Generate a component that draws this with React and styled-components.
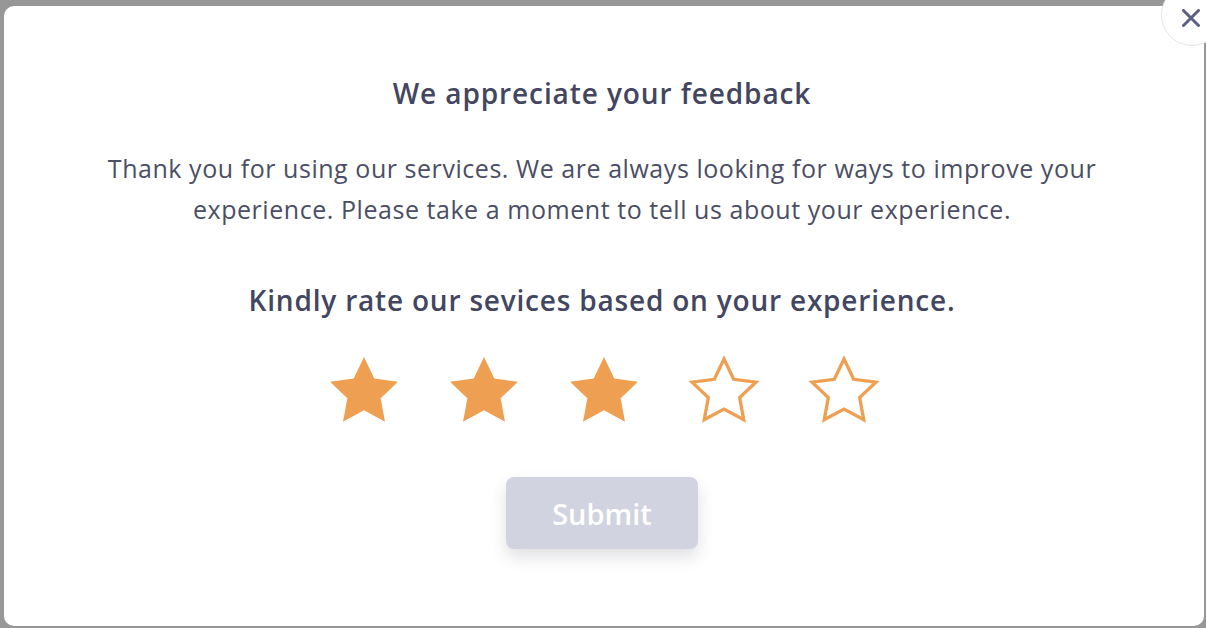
import React, { useState } from 'react';
import styled, { createGlobalStyle } from 'styled-components';

const GlobalStyle = createGlobalStyle`
  html, body {
    margin: 0;
    padding: 0;
    background: #979797;
    font-family: "Open Sans", "Lato", sans-serif;
    overflow: hidden;
  }
`;

const Backdrop = styled.div`
  width: 1206px;
  height: 628px;
  padding: 6px 2px 2px 4px;
  box-sizing: border-box;
`;

const Modal = styled.div`
  position: relative;
  width: 1200px;
  height: 620px;
  background: #fff;
  border-radius: 10px;
  display: flex;
  flex-direction: column;
  align-items: center;
  padding-top: 71px;
  box-sizing: border-box;
`;

const CloseButton = styled.button`
  position: absolute;
  top: -22px;
  right: -19px;
  width: 62px;
  height: 62px;
  border-radius: 50%;
  background: #fff;
  border: 1px solid #e6e6ea;
  display: flex;
  align-items: flex-start;
  justify-content: flex-start;
  padding: 0;
  cursor: pointer;

  svg {
    margin: 24px 0 0 20px;
  }
`;

const Title = styled.h2`
  margin: 0 4px 0 0;
  font-size: 28px;
  line-height: 32px;
  font-weight: 600;
  letter-spacing: 0.9px;
  color: #434660;
`;

const Text = styled.p`
  margin: 39px 4px 0 0;
  width: 1010px;
  text-align: center;
  font-size: 25px;
  line-height: 41px;
  font-weight: 400;
  letter-spacing: 0.55px;
  color: #4b4e65;
`;

const Subtitle = styled.h3`
  margin: 54px 4px 0 0;
  font-size: 28px;
  line-height: 32px;
  font-weight: 600;
  letter-spacing: 0.8px;
  color: #434660;
`;

const Stars = styled.div`
  display: flex;
  gap: 48px;
  margin-top: 39px;
`;

const StarButton = styled.button`
  background: none;
  border: none;
  padding: 0;
  width: 72px;
  height: 69px;
  cursor: pointer;
`;

const SubmitButton = styled.button`
  margin: 53px 4px 0 0;
  width: 192px;
  height: 72px;
  border: none;
  border-radius: 8px;
  background: #d1d3e0;
  color: #fff;
  font-family: "Open Sans", "Lato", sans-serif;
  font-size: 29px;
  font-weight: 600;
  box-shadow: 0 8px 16px rgba(60, 64, 90, 0.16);
  cursor: pointer;
`;

const STAR = 'M34 0 L44.29 21.59 L68 24.7 L50.64 41.16 L55.01 64.67 L34 53.25 L12.99 64.67 L17.36 41.16 L0 24.7 L23.71 21.59 Z';

function Star({ filled }) {
  return (
    <svg width="72" height="69" viewBox="-2 -2 72 69">
      {filled ? (
        <path d={STAR} fill="#ee9f52" />
      ) : (
        <path
          d={STAR}
          fill="none"
          stroke="#ee9f52"
          strokeWidth="3.5"
          strokeLinejoin="miter"
          transform="translate(34 33) scale(0.94) translate(-34 -33)"
        />
      )}
    </svg>
  );
}

export default function App() {
  const [rating, setRating] = useState(3);
  return (
    <>
      <GlobalStyle />
      <Backdrop>
        <Modal>
          <CloseButton aria-label="Close">
            <svg width="18" height="18" viewBox="0 0 18 18">
              <path d="M1.5 1.5 L16.5 16.5 M16.5 1.5 L1.5 16.5" stroke="#5b5f86" strokeWidth="3" strokeLinecap="round" />
            </svg>
          </CloseButton>
          <Title>We appreciate your feedback</Title>
          <Text>
            Thank you for using our services. We are always looking for ways to improve your
            experience. Please take a moment to tell us about your experience.
          </Text>
          <Subtitle>Kindly rate our sevices based on your experience.</Subtitle>
          <Stars>
            {[1, 2, 3, 4, 5].map((n) => (
              <StarButton key={n} onClick={() => setRating(n)}>
                <Star filled={n <= rating} />
              </StarButton>
            ))}
          </Stars>
          <SubmitButton>Submit</SubmitButton>
        </Modal>
      </Backdrop>
    </>
  );
}
